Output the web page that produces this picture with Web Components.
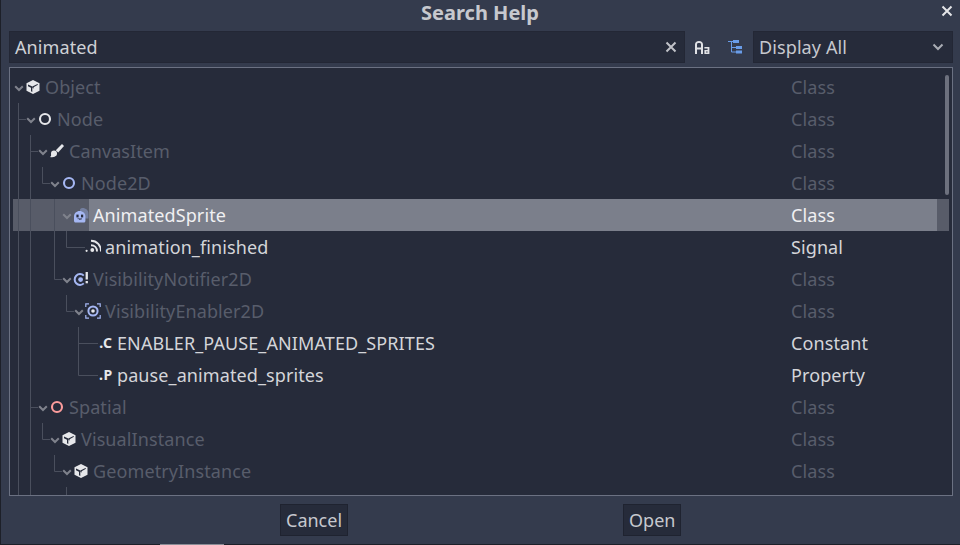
<!DOCTYPE html>
<html><head><meta charset="utf-8"><title>Search Help</title>
<style>
html,body{margin:0;padding:0;background:#1d2029;height:545px;overflow:hidden;font-family:"Noto Sans",sans-serif;letter-spacing:.1px}
</style></head><body>
<search-dialog>
  <span slot="title">Search Help</span>
  <line-edit slot="search">Animated</line-edit>
  <icon-btn slot="search" kind="case"></icon-btn>
  <icon-btn slot="search" kind="hier"></icon-btn>
  <option-btn slot="search">Display All</option-btn>
  <tree-row slot="tree" depth="0" icon="cube" type="Class" dim fold>Object</tree-row>
  <tree-row slot="tree" depth="1" icon="ring-white" type="Class" dim fold>Node</tree-row>
  <tree-row slot="tree" depth="2" icon="brush" type="Class" dim fold>CanvasItem</tree-row>
  <tree-row slot="tree" depth="3" icon="ring-blue" type="Class" dim fold>Node2D</tree-row>
  <tree-row slot="tree" depth="4" icon="sprite" type="Class" selected fold>AnimatedSprite</tree-row>
  <tree-row slot="tree" depth="5" icon="signal" type="Signal">animation_finished</tree-row>
  <tree-row slot="tree" depth="4" icon="notifier" type="Class" dim fold>VisibilityNotifier2D</tree-row>
  <tree-row slot="tree" depth="5" icon="enabler" type="Class" dim fold>VisibilityEnabler2D</tree-row>
  <tree-row slot="tree" depth="6" glyph=".C" type="Constant">ENABLER_PAUSE_ANIMATED_SPRITES</tree-row>
  <tree-row slot="tree" depth="6" glyph=".P" type="Property">pause_animated_sprites</tree-row>
  <tree-row slot="tree" depth="2" icon="ring-red" type="Class" dim fold>Spatial</tree-row>
  <tree-row slot="tree" depth="3" icon="cube" type="Class" dim fold>VisualInstance</tree-row>
  <tree-row slot="tree" depth="4" icon="cube" type="Class" dim fold>GeometryInstance</tree-row>
  <dialog-btn slot="footer" style="min-width:68px">Cancel</dialog-btn>
  <dialog-btn slot="footer" style="min-width:58px">Open</dialog-btn>
</search-dialog>
<under-strip></under-strip>
<script>
const X='<path d="M1.5 1.5 10.5 10.5M10.5 1.5 1.5 10.5" fill="none" stroke="currentColor" stroke-width="2"/>';
const cube='<path fill="#e6e7ea" d="M8 1 14.5 4.2V11.8L8 15 1.5 11.8V4.2Z"/><path fill="#262b3a" d="M3 5.4 7.3 7.6V13L6 12.3V8.8L3 7.2Z"/><path fill="#262b3a" d="M7.3 7.6 12.5 5 13 5.8 8.6 8.2 8.6 9.6 7.3 9Z"/>';
const ring=c=>`<circle cx="8" cy="8" r="5" fill="none" stroke="${c}" stroke-width="2.1"/>`;
const ICONS={
 cube,
 'ring-white':ring('#e6e7ea'),'ring-blue':ring('#a5b7f3'),'ring-red':ring('#fc9c9c'),
 brush:'<path fill="#e6e7ea" d="M13 1 15 3 9.2 9.4 6.8 7.2Z"/><circle cx="5" cy="10.6" r="3" fill="#e6e7ea"/><path fill="#e6e7ea" d="M1 14C2.6 13.4 2 11.5 2.6 10L6 13.6C4.6 14.3 2.6 14.4 1 14Z"/>',
 sprite:'<path fill="#8492bd" opacity=".65" d="M9.5 1C13 1 15.4 3.4 15.4 6.6V11.5H7V2.5C7.6 1.5 8.5 1 9.5 1Z"/><path fill="#a5b7f3" d="M6.5 4C9.8 4 12.4 6.4 12.4 9.4V13.8C12.4 14.8 11.8 15.6 10.8 15.6H2.6C1.6 15.6 1 14.8 1 13.8V9.2C1 6.4 3.6 4 6.5 4Z"/><rect x="3.4" y="7.6" width="2.2" height="2.8" fill="#262b3a"/><rect x="8" y="7.6" width="2.2" height="2.8" fill="#262b3a"/><path fill="#262b3a" d="M4.4 11.6h4.8c-.3 1.6-4.5 1.6-4.8 0Z"/>',
 signal:'<g transform="translate(0 -1.2)"><circle cx="1.6" cy="13" r="1.1" fill="#e6e7ea"/><circle cx="7.3" cy="12.2" r="1.9" fill="#e6e7ea"/><path fill="none" stroke="#e6e7ea" stroke-width="1.9" d="M6 7.4C9.5 7.4 12 10 12 13.6M6 3C12 3 16 7.6 16 13.6"/></g>',
 notifier:'<path fill="none" stroke="#a5b7f3" stroke-width="2" d="M10.8 4.6A5.4 5.4 0 1 0 10.8 12.4"/><circle cx="7.6" cy="8.6" r="2.4" fill="#a5b7f3"/><rect x="12.6" y="1" width="2.3" height="7.5" fill="#e6e7ea"/><rect x="12.6" y="10" width="2.3" height="2.3" fill="#e6e7ea"/>',
 enabler:'<path fill="none" stroke="#a5b7f3" stroke-width="1.2" d="M.8 4V.8H4M12 .8H15.2V4M15.2 12V15.2H12M4 15.2H.8V12"/><circle cx="8" cy="8" r="4.6" fill="none" stroke="#a5b7f3" stroke-width="2"/><circle cx="8" cy="8" r="1.8" fill="#e6e7ea"/>',
 case:'<path fill="#e0e1e5" d="M1 15V5.5C1 3.2 2.6 2 5 2S9 3.2 9 5.5V15H7V10.5H3V15ZM3 8.5H7V5.5C7 4.4 6.4 4 5 4S3 4.4 3 5.5Z"/><path fill="#e0e1e5" d="M10.4 8H15.4V15H10.4V11H13.6V9.6H10.4ZM12.1 12.4V13.6H13.6V12.4Z"/>',
 hier:'<path fill="none" stroke="#699ce8" stroke-width="1" d="M4.5 2.5V13H9M4.5 8.5H9M1 2.5H6"/><rect x="6" y="1" width="6" height="3" fill="#699ce8"/><rect x="9" y="7" width="6" height="3" fill="#699ce8"/><rect x="9" y="11.5" width="6" height="3" fill="#699ce8"/>'
};
function def(name,css,html,init){
  customElements.define(name,class extends HTMLElement{
    constructor(){super();this.attachShadow({mode:'open'}).innerHTML=`<style>${css}</style>${html}`;}
    connectedCallback(){init&&init(this,this.shadowRoot)}
  });
}
def('search-dialog',`
:host{display:flex;flex-direction:column;width:959px;height:544px;margin-left:1px;background:#343b4d;box-sizing:border-box;color:#cfd1d6}
.title{height:31px;display:flex;align-items:flex-start;justify-content:center;position:relative;font-weight:700;font-size:20px;line-height:25px;letter-spacing:0;color:#c6c8ce;padding-right:1px;box-sizing:border-box}
.close{position:absolute;left:940px;top:5px;width:12px;height:12px;color:#e4e5e8;display:block}
.search{display:flex;height:32px;margin-left:8px;margin-right:7px}
.frame{position:relative;margin:4px 7px 0 8px;height:429px;box-sizing:border-box;border:1px solid #6b7182;background:#262b3a;overflow:hidden;padding:3px 3px 0}
.rows{display:block;width:936px}
.guides{position:absolute;left:0;top:0;width:942px;height:427px;pointer-events:none}
.sb{position:absolute;left:935px;top:7px;width:4px;height:120px;border-radius:2px;background:#6d717e}
.footer{display:flex;padding:8px 0 0 279px;gap:275px}
`,`
<div class="title"><slot name="title"></slot><svg class="close" viewBox="0 0 12 12">${X}</svg></div>
<div class="search"><slot name="search"></slot></div>
<div class="frame"><div class="rows"><slot name="tree"></slot></div>
<svg class="guides" viewBox="10 68 942 427"><path fill="none" stroke="#4a4f5d" stroke-width="1" d="
M18.5 103V495M18.5 119.5H26
M30.5 135V495M30.5 151.5H38M30.5 407.5H38
M42.5 167V183.5H50M42.5 423V439.5H50
M54.5 199V279.5H62M54.5 455V471.5H62
M66.5 231V247.5H85M66.5 295V311.5H74M66.5 487V495
M78.5 327V375.5H98M78.5 343.5H98"/></svg>
<div class="sb"></div></div>
<div class="footer"><slot name="footer"></slot></div>
`);
def('line-edit',`
:host{display:flex;align-items:center;width:676px;height:32px;box-sizing:border-box;background:#262b3a;border:1px solid #232735;padding:0 6px 0 5px;font-size:18px;color:#cfd1d6;margin-right:8px}
span{flex:1}svg{width:12px;height:12px;color:#c0c2c8;margin:0 1px 0 0}
`,`<span><slot></slot></span><svg viewBox="0 0 12 12">${X}</svg>`);
def('icon-btn',`
:host{display:flex;align-items:center;justify-content:center;width:16px;height:32px;margin:0 9px 0 1px}
:host([kind=hier]){margin:0 9px 0 8px}
svg{width:16px;height:16px;display:block}
`,`<svg viewBox="0 0 16 16"></svg>`,(el,root)=>{root.querySelector('svg').innerHTML=ICONS[el.getAttribute('kind')]});
def('option-btn',`
:host{display:flex;align-items:center;width:200px;height:32px;box-sizing:border-box;background:#262b3a;border:1px solid #232735;padding:0 8px 0 5px;font-size:18px;color:#c6c8ce;margin-left:auto}
span{flex:1}svg{width:12px;height:8px;color:#a9acb4}
`,`<span><slot></slot></span><svg viewBox="0 0 12 8"><path d="M1.5 1.5 6 6 10.5 1.5" fill="none" stroke="currentColor" stroke-width="2"/></svg>`);
def('tree-row',`
:host{display:flex;height:32px;font-size:18px;color:#d4d5d9;line-height:32px;white-space:nowrap}
:host([dim]){color:#585d6b}
:host([selected]){background:#585c69;color:#f0f0f2}
.ind{flex:none}
.chev{flex:none;width:12px;height:32px;display:flex;align-items:center;justify-content:center}
.chev svg{width:10px;height:7px;color:#7f828c;margin-top:2px}
.ico{flex:none;width:16px;height:32px;display:flex;align-items:center;justify-content:center;position:relative}
.ico svg{width:16px;height:16px;display:block}
.gl{font-size:14px;font-weight:700;color:#e6e7ea;letter-spacing:.6px;line-height:16px;margin:-1px 0 0 2px}
.left{display:flex;width:778px;flex:none}
.name{flex:1;padding-left:4px}
.type{flex:none;width:146px}
.tail{flex:none;width:12px}
:host([selected]) .name,:host([selected]) .type{background:#7b7f8b}
`,`<div class="left"><div class="ind"></div><div class="chev"></div><div class="ico"></div><div class="name"><slot></slot></div></div><div class="type"></div><div class="tail"></div>`,(el,r)=>{
  r.querySelector('.ind').style.width=(12*+el.getAttribute('depth'))+'px';
  if(el.hasAttribute('fold'))r.querySelector('.chev').innerHTML='<svg viewBox="0 0 10 7"><path d="M1.2 1.2 5 5 8.8 1.2" fill="none" stroke="currentColor" stroke-width="2"/></svg>';
  const ic=el.getAttribute('icon'),g=el.getAttribute('glyph'),b=r.querySelector('.ico');
  if(ic)b.innerHTML=`<svg viewBox="0 0 16 16">${ICONS[ic]}</svg>`;
  if(g)b.innerHTML=`<span class="gl">${g}</span>`;
  r.querySelector('.type').textContent=el.getAttribute('type');
});
def('dialog-btn',`
:host{display:block;height:32px;box-sizing:border-box;background:#262b3a;border:1px solid #1f2330;padding:0 5px;font-size:18px;line-height:31px;letter-spacing:0;color:#c6c8ce;white-space:nowrap}
`,`<slot></slot>`);
def('under-strip',`
:host{display:block;height:1px;padding-left:160px}
div{width:64px;height:1px;background:#8a8d96}
`,`<div></div>`);
</script>
</body></html>
